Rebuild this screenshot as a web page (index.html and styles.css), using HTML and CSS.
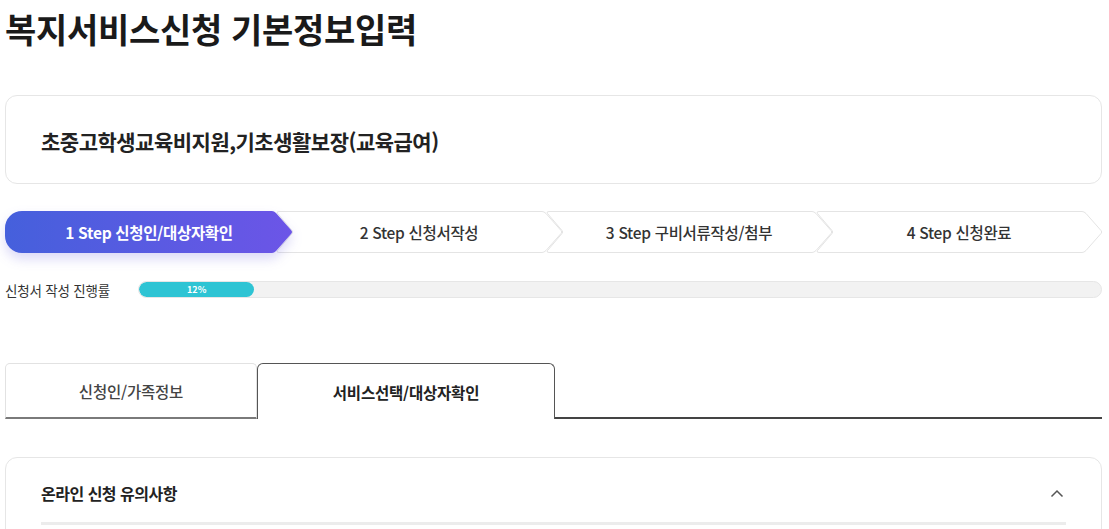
FILE: index.html
```html
<!DOCTYPE html>
<html lang="ko">
<head>
<meta charset="utf-8">
<title>복지서비스신청 기본정보입력</title>
<link rel="stylesheet" href="styles.css">
</head>
<body>
<div class="page">
  <h1 class="title">복지서비스신청 기본정보입력</h1>

  <div class="service-card">
    <p class="service-name">초중고학생교육비지원,기초생활보장(교육급여)</p>
  </div>

  <ol class="steps">
    <li class="step step-active">
      <svg class="step-bg" width="288" height="42" viewBox="0 0 288 42">
        <defs>
          <linearGradient id="stepGrad" x1="0" y1="0" x2="1" y2="0">
            <stop offset="0" stop-color="#4560dc"/>
            <stop offset="1" stop-color="#6c55e7"/>
          </linearGradient>
        </defs>
        <path d="M17,0 H267 Q269,0 271,2 L286,19 Q288,21 286,23 L271,40 Q269,42 267,42 H17 A17,17 0 0 1 0,25 V17 A17,17 0 0 1 17,0 Z" fill="url(#stepGrad)"/>
      </svg>
      <span class="step-label">1 Step 신청인/대상자확인</span>
    </li>
    <li class="step step-2">
      <svg class="step-bg" width="288" height="42" viewBox="0 0 288 42">
        <path d="M4,0.5 H267 Q269,0.5 271,2.5 L286,19.5 Q287.5,21 286,22.5 L271,39.5 Q269,41.5 267,41.5 H4 Q1,41.5 2.5,39.5 L17,22.5 Q18.5,21 17,19.5 L2.5,2.5 Q1,0.5 4,0.5 Z" fill="#fff" stroke="#e4e4e4"/>
      </svg>
      <span class="step-label">2 Step 신청서작성</span>
    </li>
    <li class="step step-3">
      <svg class="step-bg" width="288" height="42" viewBox="0 0 288 42">
        <path d="M4,0.5 H267 Q269,0.5 271,2.5 L286,19.5 Q287.5,21 286,22.5 L271,39.5 Q269,41.5 267,41.5 H4 Q1,41.5 2.5,39.5 L17,22.5 Q18.5,21 17,19.5 L2.5,2.5 Q1,0.5 4,0.5 Z" fill="#fff" stroke="#e4e4e4"/>
      </svg>
      <span class="step-label">3 Step 구비서류작성/첨부</span>
    </li>
    <li class="step step-4">
      <svg class="step-bg" width="288" height="42" viewBox="0 0 288 42">
        <path d="M4,0.5 H267 Q269,0.5 271,2.5 L286,19.5 Q287.5,21 286,22.5 L271,39.5 Q269,41.5 267,41.5 H4 Q1,41.5 2.5,39.5 L17,22.5 Q18.5,21 17,19.5 L2.5,2.5 Q1,0.5 4,0.5 Z" fill="#fff" stroke="#e4e4e4"/>
      </svg>
      <span class="step-label">4 Step 신청완료</span>
    </li>
  </ol>

  <div class="progress">
    <span class="progress-label">신청서 작성 진행률</span>
    <div class="progress-track">
      <div class="progress-fill" style="width:12%">12%</div>
    </div>
  </div>

  <div class="tabs">
    <button class="tab" type="button">신청인/가족정보</button>
    <button class="tab tab-active" type="button">서비스선택/대상자확인</button>
    <div class="tab-rest"></div>
  </div>

  <section class="notice-card">
    <div class="notice-head">
      <h2 class="notice-title">온라인 신청 유의사항</h2>
      <svg class="chevron" width="14" height="9" viewBox="0 0 14 9">
        <path d="M1.5,7.5 L7,2 L12.5,7.5" fill="none" stroke="#555" stroke-width="1.5"/>
      </svg>
    </div>
    <div class="notice-divider"></div>
  </section>
</div>
</body>
</html>
```

FILE: styles.css
```css
* {
  box-sizing: border-box;
}

html, body {
  margin: 0;
  padding: 0;
  background: #fff;
}

body {
  font-family: "Noto Sans CJK KR", "Noto Sans", sans-serif;
  color: #222;
  overflow: hidden;
}

.page {
  padding: 0 7px 0 5px;
}

.title {
  margin: 0;
  padding-top: 8px;
  font-size: 34px;
  line-height: 41px;
  font-weight: 700;
  letter-spacing: -0.3px;
  color: #1a1a1a;
}

.service-card {
  margin-top: 46px;
  height: 89px;
  border: 1px solid #e6e6e6;
  border-radius: 12px;
  display: flex;
  align-items: center;
  padding-left: 35px;
}

.service-name {
  margin: 3px 0 0;
  font-size: 21px;
  font-weight: 700;
  letter-spacing: -0.5px;
  color: #222;
}

.steps {
  margin: 27px 0 0;
  padding: 0;
  list-style: none;
  display: flex;
  height: 42px;
}

.step {
  position: relative;
  flex: none;
  width: 288px;
  height: 42px;
  display: flex;
  align-items: center;
  justify-content: center;
  margin-left: -18px;
  font-size: 15.5px;
  letter-spacing: -0.3px;
  color: #333;
  font-weight: 500;
}

.step:first-child {
  margin-left: 0;
}

.step-bg {
  position: absolute;
  left: 0;
  top: 0;
}

.step-label {
  position: relative;
}

.step-active {
  z-index: 4;
  color: #fff;
  font-weight: 700;
}

.step-active .step-bg {
  filter: drop-shadow(0 6px 6px rgba(90, 80, 220, 0.22));
}

.step-2 { z-index: 3; }
.step-3 { z-index: 2; }
.step-4 { z-index: 1; }

.progress {
  margin-top: 28px;
  display: flex;
  align-items: center;
  height: 17px;
}

.progress-label {
  width: 133px;
  flex: none;
  font-size: 13.5px;
  letter-spacing: -0.2px;
  color: #333;
}

.progress-track {
  flex: 1;
  height: 17px;
  border: 1px solid #e6e6e6;
  border-radius: 9px;
  background: #f2f2f2;
  overflow: hidden;
}

.progress-fill {
  height: 100%;
  background: #2ec4d4;
  border-radius: 8px;
  color: #fff;
  font-size: 9px;
  font-weight: 700;
  line-height: 15px;
  text-align: center;
}

.tabs {
  margin-top: 65px;
  display: flex;
  height: 56px;
}

.tab {
  flex: none;
  height: 56px;
  padding: 0;
  margin: 0;
  background: #fff;
  font-family: inherit;
  font-size: 15.5px;
  letter-spacing: -0.2px;
  cursor: pointer;
}

.tab:first-child {
  width: 252px;
  border: 1px solid #e2e2e2;
  border-bottom: 2px solid #7a7a7a;
  border-radius: 5px 5px 0 0;
  color: #444;
  font-weight: 500;
}

.tab-active {
  width: 298px;
  border: 1px solid #555;
  border-bottom: none;
  border-radius: 6px 6px 0 0;
  color: #222;
  font-weight: 700;
}

.tab-rest {
  flex: 1;
  border-bottom: 2px solid #444;
}

.notice-card {
  margin-top: 38px;
  border: 1px solid #e6e6e6;
  border-radius: 12px;
  padding: 0 35px;
  height: 120px;
}

.notice-head {
  display: flex;
  align-items: center;
  justify-content: space-between;
  padding-top: 23px;
  height: 47px;
}

.notice-title {
  margin: 0;
  font-size: 16px;
  line-height: 24px;
  font-weight: 700;
  letter-spacing: -0.5px;
  color: #222;
}

.chevron {
  margin-right: 2px;
}

.notice-divider {
  margin-top: 17px;
  height: 3px;
  background: #ececec;
}
```
